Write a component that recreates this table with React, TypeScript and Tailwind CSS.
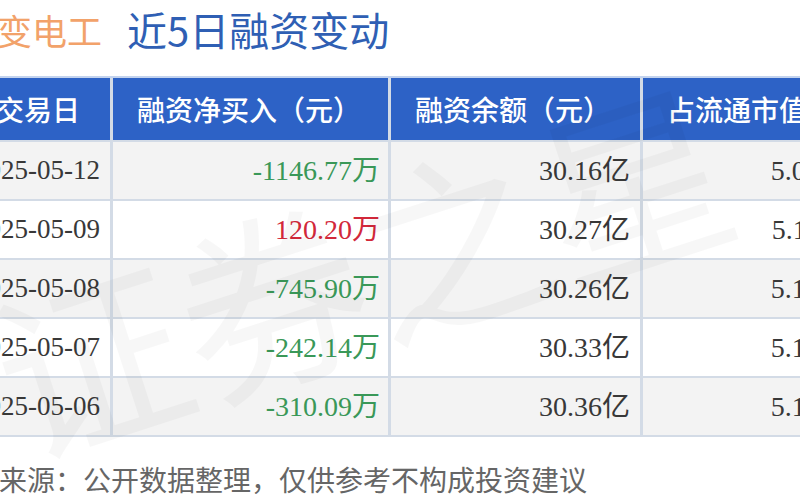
import React from "react"

type Row = {
  date: string
  net: string
  up: boolean
  balance: string
  ratio: string
}

const rows: Row[] = [
  { date: "2025-05-12", net: "-1146.77万", up: false, balance: "30.16亿", ratio: "5.06%" },
  { date: "2025-05-09", net: "120.20万", up: true, balance: "30.27亿", ratio: "5.11%" },
  { date: "2025-05-08", net: "-745.90万", up: false, balance: "30.26亿", ratio: "5.12%" },
  { date: "2025-05-07", net: "-242.14万", up: false, balance: "30.33亿", ratio: "5.14%" },
  { date: "2025-05-06", net: "-310.09万", up: false, balance: "30.36亿", ratio: "5.15%" },
]

const sans = "font-['Microsoft_YaHei','Noto_Sans_CJK_SC',sans-serif]"
const num = "font-['Liberation_Serif','Noto_Sans_CJK_SC',serif]"

export default function App() {
  return (
    <div className="relative w-[800px] h-[500px] overflow-hidden bg-white">
      {/* Title */}
      <div className={`${sans} flex items-center h-[38px] mt-[10px] ml-[-38px] leading-none whitespace-nowrap`}>
        <span className="text-[35px] text-[#f2a26a]">特变电工</span>
        <span className="ml-[25px] text-[40px] text-[#2f5fb4]">近5日融资变动</span>
      </div>

      {/* Table */}
      <div className="mt-[28px] ml-[-26px] w-[883px] border-t-2 border-[#c3d3ee] bg-[#d3dbe6] pb-[2px]">
        <div className="grid grid-cols-[136px_275px_249px_210px] gap-x-[3px] gap-y-[2px]">
          {["交易日", "融资净买入（元）", "融资余额（元）", "占流通市值比"].map((h, i) => (
            <div
              key={h}
              className={`${sans} h-[62px] flex items-center bg-[#2d62c6] text-white text-[28px] font-medium whitespace-nowrap overflow-hidden ${
                i === 0 ? "pl-[22px]" : "pl-[24px]"
              }`}
            >
              {h}
            </div>
          ))}
          {rows.map((r, idx) => {
            const bg = idx % 2 === 0 ? "bg-[#f3f3f3]" : "bg-white"
            return (
              <React.Fragment key={r.date}>
                <div className={`${num} ${bg} h-[57px] flex items-center justify-end pr-[10px] text-[27px] text-[#383838]`}>
                  {r.date}
                </div>
                <div
                  className={`${num} ${bg} h-[57px] flex items-center justify-end pr-[8px] text-[28px] ${
                    r.up ? "text-[#d2283a]" : "text-[#3a9858]"
                  }`}
                >
                  {r.net}
                </div>
                <div className={`${num} ${bg} h-[57px] flex items-center justify-end pr-[10px] text-[28px] text-[#383838]`}>
                  {r.balance}
                </div>
                <div className={`${num} ${bg} h-[57px] flex items-center justify-end pr-[10px] text-[28px] text-[#383838]`}>
                  {r.ratio}
                </div>
              </React.Fragment>
            )
          })}
        </div>
      </div>

      {/* Footer */}
      <div className={`${sans} mt-[28px] ml-[-57px] text-[28px] leading-none text-[#666] whitespace-nowrap`}>
        数据来源：公开数据整理，仅供参考不构成投资建议
      </div>

      {/* Watermark */}
      <div
        className={`${sans} pointer-events-none absolute left-[-20px] top-[170px] rotate-[-18deg] text-[190px] leading-none text-black/[0.03] whitespace-nowrap`}
      >
        证券之星
      </div>
    </div>
  )
}
